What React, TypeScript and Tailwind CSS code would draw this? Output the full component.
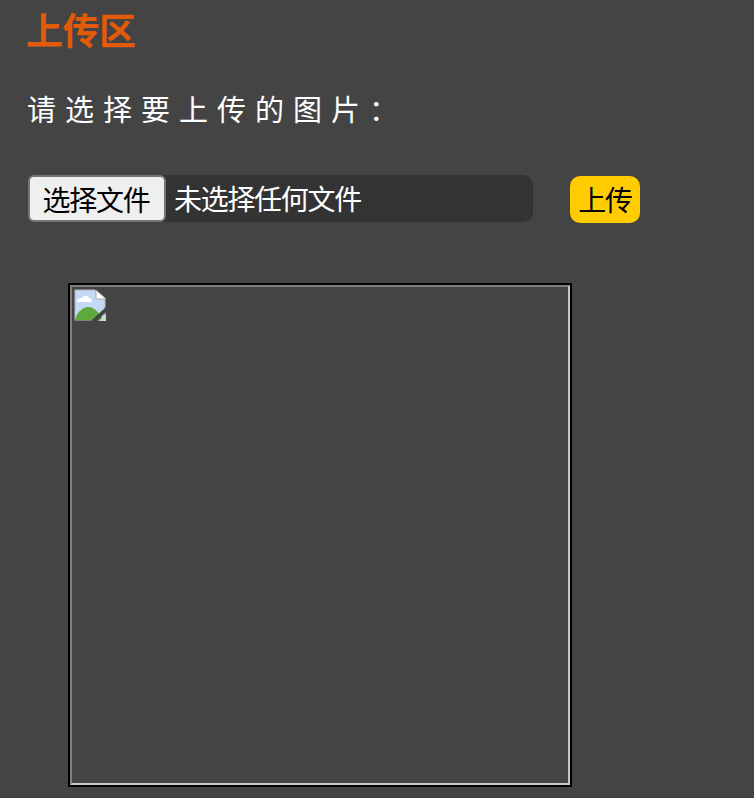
import React from 'react'

const BrokenImageIcon = () => (
    <svg width="32" height="32" viewBox="0 0 32 32" className="block">
        <path d="M1 1H21L31 11V31H1Z" fill="#c6d9f4" stroke="#b4b9c2" strokeWidth="1" />
        <path d="M22 1L32 10H22Z" fill="#fff" stroke="#a9a9a9" strokeWidth="1" />
        <path d="M3 13C3 10 6 9 8 9C10 6 14 6 15 9C17 9 18 11 18 13Z" fill="#fff" />
        <path d="M1 31C3 23 9 18 14 18C20 18 26 24 29 31Z" fill="#5fa83b" />
        <path d="M32 18V23L23 32H17Z" fill="#444444" />
        <path d="M32 25V32H25Z" fill="#cfd8c8" />
    </svg>
)

const App = () => {
    return (
        <div className="h-[798px] w-[754px] overflow-hidden bg-[#444444] pl-7 font-['Liberation_Sans','Noto_Sans_CJK_SC',sans-serif]">
            <h1 className="-ml-0.5 pt-[10px] text-[37px] leading-[46px] font-bold tracking-[-0.5px] text-[#e35a08]">上传区</h1>
            <p className="mt-[37px] -ml-px text-[29px] leading-[36px] tracking-[9px] text-white">请选择要上传的图片：</p>

            <div className="mt-[46px] flex items-start">
                <div className="flex h-[47px] w-[505px] items-center rounded-[10px] bg-[#333333]">
                    <button className="h-[47px] w-[138px] rounded-[6px] border-2 border-[#767676] bg-[#efefef] pt-1 pr-0.5 text-[28px] tracking-[-1.3px] text-black">选择文件</button>
                    <span className="ml-2 pt-1 text-[28px] tracking-[-1.3px] text-white">未选择任何文件</span>
                </div>
                <button className="mt-px ml-[37px] h-[47px] w-[70px] rounded-[10px] bg-[#ffcc00] pt-1 text-[28px] tracking-[-1.3px] text-black">上传</button>
            </div>

            <div className="mt-[60px] ml-10 h-[504px] w-[504px] border-2 border-black">
                <div className="h-full w-full border-2 border-t-[#7f7f7f] border-r-[#c8c8c8] border-b-[#c8c8c8] border-l-[#7f7f7f]">
                    <div className="p-0.5">
                        <BrokenImageIcon />
                    </div>
                </div>
            </div>
        </div>
    );
};

export default App;
